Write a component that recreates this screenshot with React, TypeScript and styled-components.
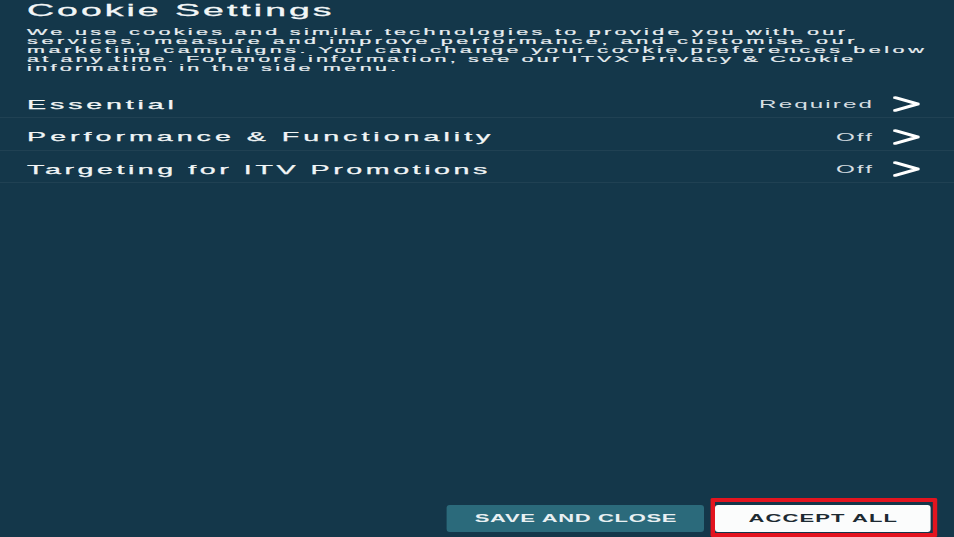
import React from "react";
import styled, { createGlobalStyle } from "styled-components";

const STRETCH = 2.2;
const PAGE_W = 954;
const PAGE_H = 537;

const GlobalStyle = createGlobalStyle`
  html, body {
    margin: 0;
    padding: 0;
    background: #14374a;
    overflow: hidden;
  }
  * { box-sizing: border-box; }
`;

const Viewport = styled.div`
  width: ${PAGE_W}px;
  height: ${PAGE_H}px;
  overflow: hidden;
  background: #14374a;
  font-family: "Liberation Sans", Arial, sans-serif;
`;

/* The TV UI is shown horizontally stretched; the stage is laid out narrow and scaled. */
const Stage = styled.div`
  width: ${PAGE_W / STRETCH}px;
  height: ${PAGE_H}px;
  transform: scaleX(${STRETCH});
  transform-origin: 0 0;
  display: flex;
  flex-direction: column;
`;

const Header = styled.header`
  padding: 1px 12.3px 0 12.3px;
`;

const Title = styled.h1`
  margin: 0;
  font-size: 17px;
  line-height: 20px;
  font-weight: 400;
  letter-spacing: 1.38px;
  color: #f2f6f7;
  -webkit-text-stroke: 0.3px #f2f6f7;
  white-space: nowrap;
`;

const Intro = styled.p`
  margin: 6px 0 0 0;
  font-size: 9.8px;
  line-height: 9px;
  color: #e8eef1;
  -webkit-text-stroke: 0.2px #e8eef1;
`;

const IntroLine = styled.span<{ $spacing: number }>`
  display: block;
  white-space: nowrap;
  letter-spacing: ${(p) => p.$spacing}px;
`;

const List = styled.ul`
  list-style: none;
  margin: 19px 0 0 0;
  padding: 0;
`;

const Row = styled.li`
  height: 27px;
  margin-bottom: 5.5px;
  padding: 0 15.45px 0 12.3px;
  display: flex;
  align-items: center;
  border-bottom: 1px solid rgba(255, 255, 255, 0.055);
`;

const RowLabel = styled.span<{ $spacing: number }>`
  flex: 1;
  font-size: 13px;
  letter-spacing: ${(p) => p.$spacing}px;
  color: #f1f5f6;
  -webkit-text-stroke: 0.25px #f1f5f6;
  white-space: nowrap;
`;

const RowStatus = styled.span`
  font-size: 11px;
  letter-spacing: 0.95px;
  color: #d6dee2;
  margin-right: 8.6px;
  white-space: nowrap;
`;

const Chevron = styled.svg`
  width: 12.3px;
  height: 16px;
  display: block;
`;

const Spacer = styled.div`
  flex: 1;
`;

const Footer = styled.footer`
  display: flex;
  justify-content: flex-end;
  align-items: flex-end;
  gap: 2.7px;
  padding-right: 7.7px;
`;

const ButtonBase = styled.button`
  height: 27px;
  border: none;
  border-radius: 1.4px / 3px;
  font-family: "Liberation Sans", Arial, sans-serif;
  font-size: 10px;
  font-weight: 700;
  display: flex;
  align-items: center;
  justify-content: center;
  padding: 0;
  cursor: pointer;
`;

const SaveButton = styled(ButtonBase)`
  width: 117.3px;
  margin-bottom: 5px;
  background: #2b6a7b;
  color: #e9f0f2;
  letter-spacing: 0.3px;
`;

const Highlight = styled.div`
  border-style: solid;
  border-color: #e3141f;
  border-width: 4px 2px;
  padding: 3px 1px 1px 0.3px;
  border-radius: 1px;
`;

const AcceptButton = styled(ButtonBase)`
  width: 97.5px;
  background: #fbfcfc;
  color: #1d2a32;
  letter-spacing: 0.5px;
`;

const ChevronIcon = () => (
  <Chevron viewBox="0 0 12.3 16" fill="none">
    <polyline
      points="1,1.6 11.3,8 1,14.4"
      stroke="#ffffff"
      strokeWidth="2.7"
      strokeLinecap="round"
      strokeLinejoin="miter"
    />
  </Chevron>
);

const categories = [
  { label: "Essential", status: "Required", spacing: 1.75 },
  { label: "Performance & Functionality", status: "Off", spacing: 1.82 },
  { label: "Targeting for ITV Promotions", status: "Off", spacing: 1.62 },
];

const introLines = [
  { text: "We use cookies and similar technologies to provide you with our", spacing: 1.51 },
  { text: "services, measure and improve performance, and customise our", spacing: 1.64 },
  { text: "marketing campaigns. You can change your cookie preferences below", spacing: 1.62 },
  { text: "at any time. For more information, see our ITVX Privacy & Cookie", spacing: 1.45 },
  { text: "information in the side menu.", spacing: 1.5 },
];

export default function App() {
  return (
    <>
      <GlobalStyle />
      <Viewport>
        <Stage>
          <Header>
            <Title>Cookie Settings</Title>
            <Intro>
              {introLines.map((l) => (
                <IntroLine key={l.text} $spacing={l.spacing}>
                  {l.text}
                </IntroLine>
              ))}
            </Intro>
          </Header>
          <List>
            {categories.map((c) => (
              <Row key={c.label}>
                <RowLabel $spacing={c.spacing}>{c.label}</RowLabel>
                <RowStatus>{c.status}</RowStatus>
                <ChevronIcon />
              </Row>
            ))}
          </List>
          <Spacer />
          <Footer>
            <SaveButton>SAVE AND CLOSE</SaveButton>
            <Highlight>
              <AcceptButton>ACCEPT ALL</AcceptButton>
            </Highlight>
          </Footer>
        </Stage>
      </Viewport>
    </>
  );
}
